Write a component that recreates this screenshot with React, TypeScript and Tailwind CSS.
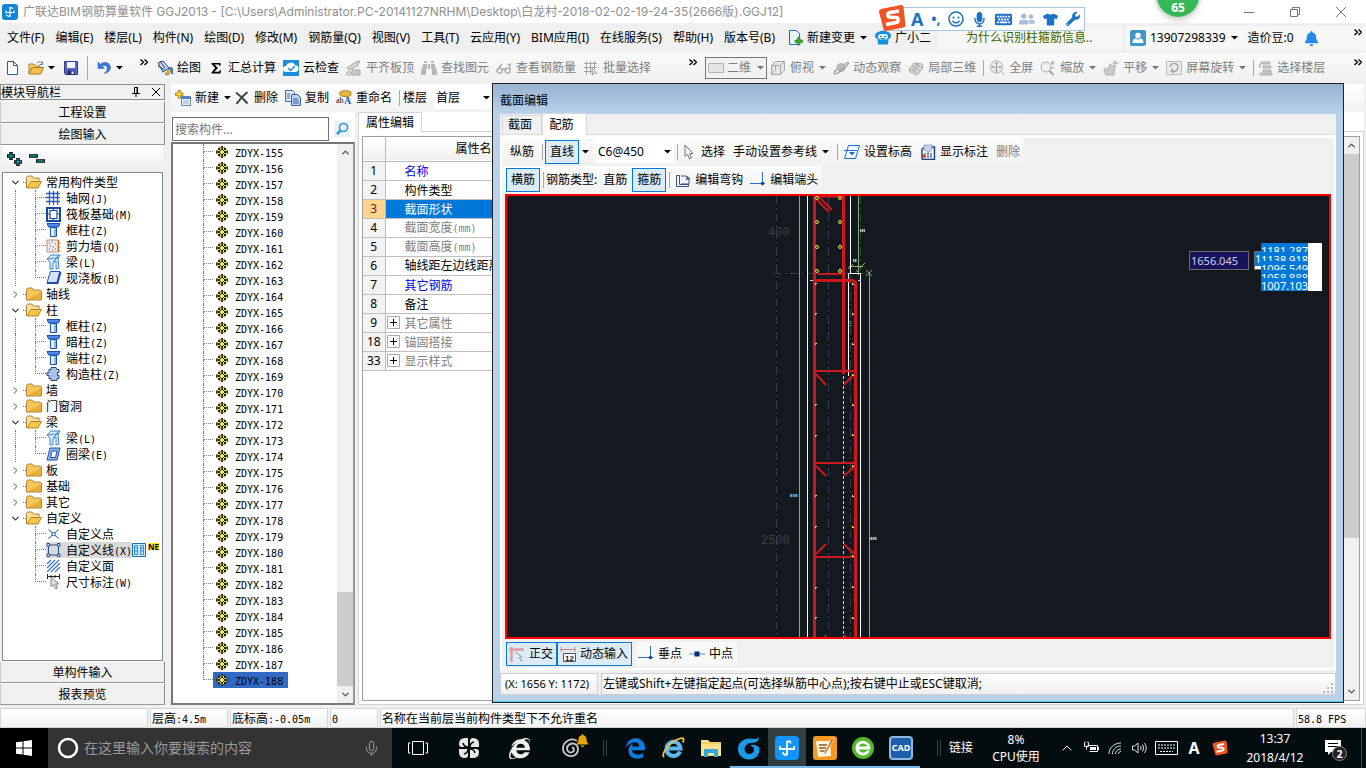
import React from "react";
import {
  FaBell,
  FaBinoculars,
  FaEdgeLegacy,
  FaInternetExplorer,
  FaKeyboard,
  FaMicrophone,
  FaRegSmile,
  FaTshirt,
  FaUserFriends,
  FaWrench,
} from "react-icons/fa";
import { ChevronDown, ChevronRight, ChevronUp, Mic } from "lucide-react";

const ui = "font-['Noto_Sans','Noto_Sans_CJK_SC',sans-serif]";

// Chinese at 12px, latin as half width characters
function Song({ children }: { children: string }) {
  return (
    <span className="whitespace-nowrap font-['Noto_Sans_CJK_SC',sans-serif] text-xs">
      {children.split(/([\x20-\x7e]+)/).map((part, i) =>
        i % 2 ? (
          <span key={i} className="whitespace-pre font-['DejaVu_Sans_Mono','Noto_Sans_CJK_SC',monospace] text-[10px]">
            {part}
          </span>
        ) : (
          part
        )
      )}
    </span>
  );
}

function Svg({ children, className = "h-4 w-4", box = "0 0 16 16" }: { children: React.ReactNode; className?: string; box?: string }) {
  return (
    <svg viewBox={box} className={"shrink-0 " + className} fill="none" aria-hidden="true">
      {children}
    </svg>
  );
}

function Caret({ gray = false }: { gray?: boolean }) {
  return (
    <Svg className="h-1 w-[7px]" box="0 0 7 4">
      <path d="M0 0h7L3.5 3.6z" fill={gray ? "#777" : "#000"} />
    </Svg>
  );
}

function Sep() {
  return <div className="h-4 w-px shrink-0 bg-[#a9a9a9]" />;
}

function More() {
  return (
    <button aria-label="更多" className="shrink-0">
      <Svg className="h-[7px] w-2" box="0 0 8 7">
        <path d="M.5.5l3 2.8-3 2.8M4.5.5l3 2.8-3 2.8" stroke="#000" strokeWidth="1.4" />
      </Svg>
    </button>
  );
}

const icons: Record<string, React.ReactNode> = {
  file: <path d="M3.500 1.500h6l4 4v9h-10zM9.500 1.500v4h4" fill="#fff" stroke="#38598c" />,
  open: (
    <>
      <path d="M1 14V4h5l1.500 2H12v2" fill="#f2cf6b" stroke="#a57c23" />
      <path d="M1 14l3-6.500h11.500L12.500 14z" fill="#f9c14b" stroke="#a57c23" />
      <path d="M9 3c2-2 4-1.500 5 .5M14.500 1.500v3h-3" stroke="#52749e" />
    </>
  ),
  save: (
    <>
      <path d="M1.500 1.500h13v13h-12l-1-1z" fill="#5b66c9" stroke="#303a91" />
      <path d="M4 2h8v6H4z" fill="#f2f4ff" />
      <path d="M4.500 10.500h7V15h-7z" fill="#262d68" />
      <path d="M8.500 11.500h2V14h-2z" fill="#fff" />
    </>
  ),
  undo: <path d="M2 2v6.500h6.500L6.200 6C9 4.500 12 6 11 9.500c-.4 2-1.500 3-3 4 4-.5 6.500-3 6.500-6C14.500 3 9 .5 4.300 4.200z" fill="#3c78dd" stroke="#2d5bb0" strokeWidth=".5" />,
  paint: (
    <>
      <path d="M1 3l5-2 6 7-6 4z" fill="#c9d8ee" stroke="#27457c" />
      <path d="M3 1l5 7M1 6l7 4" stroke="#27457c" />
      <path d="M8 14l6-7 2 2-5 6z" fill="#f2b13c" stroke="#7b5416" strokeWidth=".7" />
      <path d="M12 8c3 1 4 3 3 6" stroke="#2472d2" strokeWidth="2" />
    </>
  ),
  sigma: <path d="M3.500 3h9v3h-1c0-1-.5-1.500-1.500-1.500H6.500L10 8l-3.800 3.700h4c1 0 1.500-.5 1.800-1.700h1l-.5 3.500h-9v-1L7.200 8 3.500 4z" fill="#000" />,
  cloud: (
    <>
      <path d="M0 0h16v16H0z" fill="#1b8fdb" />
      <path d="M3 12a3 3 0 010-6 5 5 0 019-1 3.600 3.600 0 011 7z" fill="#fff" />
      <path d="M5 8l2.500 2.500L12 6" stroke="#1b8fdb" strokeWidth="1.500" />
    </>
  ),
  slab: (
    <>
      <path d="M1 8l9-6 4-1-3 5-8 4zM6 10h8v5H6z" fill="#d7d7d7" stroke="#a3a3a3" />
      <path d="M1 12h4v3H1zM9 11v4M12 11v4" stroke="#a3a3a3" />
    </>
  ),
  batch: (
    <>
      <path d="M1 3.500h13M1 7.500h13M1 11.500h8M3.500 1v14M7.500 1v13M11.500 1v8" stroke="#a5a5a5" />
      <path d="M9 8l5 5-3 .3-1.500 2z" fill="#ddd" stroke="#999" strokeWidth=".8" />
    </>
  ),
  rect: <path d="M.5 3.500h15v9H.5z" fill="#e4e4e4" stroke="#b4b4b4" />,
  cube: (
    <>
      <path d="M1.500 5.500l4-4h9v9l-4 4h-9z" fill="#e5e5e5" stroke="#a6a6a6" />
      <path d="M1.500 5.500h9v9M10.500 5.500l4-4M5.500 9.500V6M5.500 10l-4 4" stroke="#a6a6a6" />
    </>
  ),
  orbit: (
    <>
      <circle cx="8" cy="7.500" r="4.500" fill="#b9b9b9" />
      <path d="M11 5c3-3 4.500-3 4.500-2C15.500 5 5 14 2 14c-2-.5 0-3 2-5" stroke="#9b9b9b" strokeWidth="1.200" />
    </>
  ),
  local3d: (
    <>
      <path d="M1 9l5-6 8 1 1 4-6 7-7-3z" fill="#dedede" stroke="#a8a8a8" />
      <path d="M4 6l8 5M7 4l7 4M2 9l7 4M6 12l5-8M4 11l5-8" stroke="#a8a8a8" />
    </>
  ),
  full: (
    <>
      <circle cx="7.500" cy="7" r="6" fill="#f1f1f1" stroke="#a9a9a9" />
      <path d="M7.500 2.500v9M3 7h9M6 4l1.500-1.500L9 4M6 10l1.500 1.500L9 10M4.500 5.500L3 7l1.500 1.500M10.500 5.500L12 7l-1.500 1.500M12 11.500l3.500 3.500" stroke="#a2a2a2" />
    </>
  ),
  zoom: (
    <>
      <circle cx="6" cy="7" r="5" fill="#f1f1f1" stroke="#a9a9a9" />
      <path d="M9.500 11l4 4" stroke="#a2a2a2" strokeWidth="2" />
      <path d="M12.500 1v4M10.500 3h4M10.500 8h4" stroke="#a2a2a2" />
    </>
  ),
  hand: (
    <>
      <path d="M3 15c-2-4-3-7-1-7l2 2 3-6 3 2 2 0-1 9z" fill="#c9c9c9" stroke="#b0b0b0" />
      <path d="M12 0v6M9.500 3h6" stroke="#a2a2a2" />
    </>
  ),
  rotate: (
    <>
      <path d="M.5 1.500h15v13H.5z" fill="#ececec" stroke="#bbb" />
      <path d="M4 7c1-5 8-4 8 0s-4 5-6 4M7 8.500L5 11l3 2" stroke="#9d9d9d" strokeWidth="1.300" />
    </>
  ),
  floors: <path d="M4 2h9v2H4zM6 6h8v2H6zM6 10h8v2H6zM3 13h12v2H3zM2 4l2 2-2 2" fill="#d0d0d0" stroke="#a2a2a2" strokeWidth=".8" />,
  change: (
    <>
      <path d="M2.500.5h7l3 3v11h-10z" fill="#e8f3fb" stroke="#1d6db2" />
      <path d="M10.500 7.500h2.500V10h2.500v2.500H13V15h-2.500v-2.500H8V10h2.500z" fill="#3aa935" stroke="#1e7a1c" strokeWidth=".6" />
    </>
  ),
  robot: (
    <>
      <path d="M0 4.500q1-2 3-2.500 5-3 10 0 2 .5 3 2.500L15.500 8l-2 1-.5 5.500H3L2.500 9l-2-1z" fill="#1492dd" />
      <rect x="3" y="4" width="10" height="5.500" rx="2.700" fill="#d3efff" />
      <path d="M5 6.500h1.500M9.500 6.500H11M6 8.200c1 .8 3 .8 4 0" stroke="#105a93" />
    </>
  ),
  user: (
    <>
      <rect width="16" height="16" rx="2" fill="#3f97c9" />
      <circle cx="8" cy="5.500" r="2.800" fill="#fff" />
      <path d="M2.500 13c0-4 2-4.500 4-4.500L8 10l1.500-1.500c2 0 4 .5 4 4.500z" fill="#fff" />
    </>
  ),
  create: (
    <>
      <path d="M6.500 6.500h9v9h-9z" fill="#eef5fc" stroke="#5f83ad" />
      <path d="M7 7h8v2H7z" fill="#3b83d6" />
      <path d="M8 11h6M8 13h6" stroke="#8aabd0" />
      <path d="M3 .5h2.500V3H8v2.500H5.500V8H3V5.500H.5V3H3z" fill="#ffd93b" stroke="#977012" strokeWidth=".8" />
    </>
  ),
  cross: <path d="M2 2.500c4 3 8 7 11.500 11M13.500 2C9 5.500 6 9 2.500 14" stroke="#444" strokeWidth="2" />,
  copy: (
    <>
      <path d="M.5.500h7l2 2v9h-9z" fill="#dfeafa" stroke="#3b66ab" />
      <path d="M6.500 4.500h6l3 3v8h-9z" fill="#b7d0f3" stroke="#3b66ab" />
      <path d="M2 4h3M2 6h3M2 8h3M8 9h5M8 11h6M8 13h6" stroke="#3b66ab" />
    </>
  ),
  rename: (
    <>
      <path d="M3 3c3-3 9-3 12-1v3l-3 2-7-1z" fill="#e6b93c" stroke="#8b6513" strokeWidth=".7" />
      <text x="0" y="13" fontSize="8" fontFamily="Liberation Serif" fill="#000">ab</text>
      <text x="8" y="13.500" fontSize="10" fontWeight="bold" fontFamily="Liberation Serif" fill="#2359b8">A</text>
    </>
  ),
  cursor: <path d="M4 1l8 8.500H8.500l2 4.500-2 1-2-4.700L4 12.500z" fill="#f5f5f5" stroke="#777" />,
  elevation: (
    <>
      <path d="M4.500 1.500h11l-4 13h-11z" stroke="#1a6fc1" fill="#f4faff" />
      <path d="M0 6.500h13" stroke="#1a6fc1" />
      <path d="M5 8h6l-3 3.500z" fill="#1a6fc1" />
    </>
  ),
  dims: (
    <>
      <path d="M2 15.500V5l3-2M2 15.500h12.500V3H11" stroke="#163d70" strokeWidth="1.400" />
      <path d="M4 1h8v5l-3 2-5-2z" fill="#c5d4ee" stroke="#6c84b4" strokeWidth=".6" />
      <path d="M5 14V9M8 14V8M11 14V9" stroke="#163d70" />
      <path d="M2.500 10.500h2.500v3H2.500z" fill="#d43a1f" />
    </>
  ),
  hook: (
    <>
      <path d="M1.500 3.500h3v9h9v2h-12zM6 4h5l3 3v5H6" stroke="#3c4d8b" fill="#f1f4fd" />
      <path d="M12 4l3.500 3L11 8z" fill="#3c4d8b" />
    </>
  ),
  end: (
    <>
      <path d="M0 11.500h15M12.500 0v11" stroke="#3371c9" />
      <circle cx="12.500" cy="11.500" r="1.700" fill="#093f95" />
    </>
  ),
  mid: (
    <>
      <path d="M0 8h16" stroke="#5d91d5" />
      <path d="M5.500 5.500h5v5h-5z" fill="#082e7a" />
    </>
  ),
  ortho: (
    <>
      <path d="M2.500 1v15M0 3.500h15" stroke="#e39b9b" strokeWidth="2.500" />
      <path d="M6 6l7 5-3 .5 3 4" stroke="#8b8b8b" fill="#fff" />
    </>
  ),
  dyn: (
    <>
      <path d="M1 1v5M15 1v5M1 3.500h14" stroke="#d77a7a" />
      <path d="M3.500 7.500h12v8h-12z" fill="#fff" stroke="#555" />
      <text x="5" y="14.500" fontSize="8" fontWeight="bold" fontFamily="Liberation Sans" fill="#111">12</text>
    </>
  ),
  folder: (
    <>
      <path d="M.5 14V3.500L2 2h4l1.500 2H14l1.500 1v9z" fill="#f3c759" stroke="#ad883a" />
      <path d="M1 14L15 6v8z" fill="#dc9d22" opacity=".6" />
    </>
  ),
  folderOpen: (
    <>
      <path d="M.5 14V3.500L2 2h4l1.500 2H13v4" fill="#f8df94" stroke="#ad883a" />
      <path d="M1 14l4-6.500h10.500L12 14z" fill="#fbc444" stroke="#ad883a" />
    </>
  ),
  grid: <path d="M0 3.500h14M0 7.500h14M0 11.500h14M3.500 1v14M7.500 1v14M11.500 1v14" stroke="#2c5fc0" strokeWidth="1.300" />,
  raft: (
    <>
      <path d="M1 2h13v13H1z" fill="#fff" stroke="#124b9b" strokeWidth="2" />
      <path d="M4 4.500h7v8H4zM1 8h3M11 8h3M7.500 2v3M7.500 12v3" stroke="#124b9b" strokeWidth="1.200" />
    </>
  ),
  column: (
    <>
      <path d="M1 1.500h13L12.500 5h-10z" fill="#4f8be0" stroke="#1a4fae" />
      <path d="M4.500 5.500h6v9h-6z" fill="#e9f3ff" stroke="#1a4fae" />
      <path d="M9 6v8" stroke="#8fb8f0" strokeWidth="2" />
    </>
  ),
  shear: (
    <>
      <path d="M1 2h11v12H1z" fill="#ececec" stroke="#c78a6a" />
      <path d="M3 5h1M6 4h1M9 6h1M4 8h1M7 9h1M3 11h1M9 11h1M6 12h1" stroke="#555" />
      <path d="M12.500 2v12M12 5h2.500M12 9h2.500M12 13h2.500" stroke="#d2691e" />
    </>
  ),
  beam: (
    <>
      <path d="M1 5l4-4h9l-2 4 1 9-3 1V7L7 9v6H4V8z" fill="#d5ebfb" stroke="#3b87c8" />
      <path d="M2 5l8-1 3-3M7 8l5-5" stroke="#3b87c8" />
    </>
  ),
  slabBlue: (
    <>
      <path d="M4.500 1.500h9.500l-3 11H1z" fill="#cfe1fb" stroke="#1f4fa8" />
      <path d="M1 13h10.500l3-11" stroke="#1f4fa8" strokeWidth="2" />
    </>
  ),
  ring: <path d="M4 2h10l-3 12H1zM6 5h5l-1.500 6.500h-5z" fill="#8fb7ee" stroke="#1f4fa8" fillRule="evenodd" />,
  struct: <path d="M3 3.500h2V1.500h5l1 2h2v3h-1.500v3H13v3h-2v2H5v-2H3v-3H1v-3h2z" fill="#a9c3ea" stroke="#27477e" />,
  point: (
    <>
      <path d="M2.500 3.500l10 9M12.500 3.500l-10 9" stroke="#2e4f86" />
      <circle cx="7.500" cy="8" r="1.700" fill="#fff" stroke="#1b64c9" />
    </>
  ),
  line: (
    <>
      <path d="M2.500 3h10v10h-10z" stroke="#234d8d" />
      <path d="M1 1.500h2.500V4H1zM11.500 1.500H14V4h-2.500zM1 12h2.500v2.500H1zM11.500 12H14v2.500h-2.500z" fill="#fff" stroke="#234d8d" />
    </>
  ),
  area: <path d="M1 6l4-4M1 10l8-8M1 14L13 2M5 14l9-9M9 14l5-5" stroke="#3974d0" strokeWidth="1.200" />,
  measure: (
    <>
      <path d="M1.500 0v5M13.500 0v5M1 2.500h13M5 1v3M9 1v3" stroke="#222" />
      <path d="M5 3l8 7H9.500l2 4-2 1-2-4L5 12.500z" fill="#ddd" stroke="#888" />
    </>
  ),
};

function Icon({ name }: { name: string }) {
  return <Svg>{icons[name]}</Svg>;
}

function Tool({ icon, label, gray = false, caret = false, children }: { icon?: string; label: string; gray?: boolean; caret?: boolean; children?: React.ReactNode }) {
  return (
    <button className={"flex shrink-0 items-center gap-1 whitespace-nowrap " + (gray ? "text-[#7d7d7d]" : "text-black")}>
      {icon && <Icon name={icon} />}
      {children}
      <span>{label}</span>
      {caret && (
        <span className="pl-px">
          <Caret gray={gray} />
        </span>
      )}
    </button>
  );
}

function Toggle({ label, icon, wide = false }: { label: string; icon?: string; wide?: boolean }) {
  return (
    <button className={"flex h-6 shrink-0 items-center gap-1 border border-[#0078d7] bg-[#dcebf8] " + (wide ? "pr-[3px] pl-0.5" : "px-1")}>
      {icon && <Icon name={icon} />}
      {label}
    </button>
  );
}

const menus = ["文件(F)", "编辑(E)", "楼层(L)", "构件(N)", "绘图(D)", "修改(M)", "钢筋量(Q)", "视图(V)", "工具(T)", "云应用(Y)", "BIM应用(I)", "在线服务(S)", "帮助(H)", "版本号(B)"];

function TitleBar() {
  return (
    <header className="relative flex h-[23px] items-center bg-white pl-0.5 text-[#8f8f8f]">
      <Svg className="h-4 w-4">
        <rect width="16" height="16" rx="3" fill="#1287d8" />
        <path d="M8 3v10M4 6.500v2h8v-2M8 12.500c-2 0-3-.5-4-2M8 4c1.500-1 2.500 0 2.500 1" stroke="#fff" strokeWidth="1.200" />
      </Svg>
      <h1 className="ml-[5px] font-['Inter','Noto_Sans_CJK_SC',sans-serif] text-xs whitespace-nowrap">
        广联达BIM钢筋算量软件 GGJ2013 - [C:\Users\Administrator.PC-20141127NRHM\Desktop\白龙村-2018-02-02-19-24-35(2666版).GGJ12]
      </h1>
      <div className="ml-auto flex items-center gap-9 pr-5">
        <button aria-label="最小化">
          <Svg className="h-[10px] w-[10px]" box="0 0 10 10"><path d="M0 5.500h10" stroke="#777" /></Svg>
        </button>
        <button aria-label="还原">
          <Svg className="h-[10px] w-[10px]" box="0 0 10 10"><path d="M.5 2.500h7v7h-7zM2.500 2V.5h7v7H8" stroke="#777" /></Svg>
        </button>
        <button aria-label="关闭">
          <Svg className="h-[10px] w-[10px]" box="0 0 10 10"><path d="M0 0l10 10M10 0L0 10" stroke="#777" /></Svg>
        </button>
      </div>

      {/* ime bar */}
      <div className="absolute top-[7px] right-[281px] z-20 flex h-6 w-[196px] items-center border border-[#a9c8de] bg-white pl-[21px] text-[#1c73c5]">
        <div className="absolute -top-1 -left-3">
          <SogouLogo className="h-7 w-7" />
        </div>
        <div className="flex flex-1 items-center justify-between pr-1">
          <b className="text-lg leading-none">A</b>
          <b className="text-sm leading-none">•,</b>
          <FaRegSmile size={16} />
          <FaMicrophone size={15} />
          <FaKeyboard size={17} />
          <FaUserFriends size={16} color="#a9bcd8" />
          <FaTshirt size={15} />
          <FaWrench size={14} />
        </div>
      </div>

      <div className="absolute -top-[27px] right-[165px] z-20 flex h-[46px] w-[46px] items-end justify-center rounded-full border-2 border-[#d9ded9] bg-[#36b856] pb-px text-xs font-bold text-white shadow-md">
        65
      </div>
    </header>
  );
}

function SogouLogo({ className }: { className: string }) {
  return (
    <Svg className={className} box="0 0 28 28">
      <path d="M3 5L23 1q2 0 2.500 2l2 18q0 2-2 2.500L8 27q-2 0-2.500-2L1 8q0-2 2-3z" fill="#f05423" />
      <path d="M21 7l-9 1.500c-3 .7-3 4.500 0 4.700l6 .3c3 .2 3 4.500 0 5l-10 2" stroke="#fff" strokeWidth="3.500" />
    </Svg>
  );
}

function MenuBar() {
  return (
    <nav className="flex h-[30px] items-center bg-[#f0f0f0]">
      <div className="flex items-center gap-[11px] pl-[7px]">
        {menus.map((m) => (
          <button key={m} className="shrink-0 whitespace-nowrap">{m}</button>
        ))}
      </div>
      <div className="ml-3 flex items-center gap-2">
        <Tool icon="change" label="新建变更" caret />
        <Tool icon="robot" label="广小二" />
      </div>
      <div className="ml-[7px] flex h-6 flex-1 items-center bg-[#f6f6f6] pl-7">
        <a href="#help" className="whitespace-nowrap text-[#336600]">为什么识别柱箍筋信息..</a>
      </div>
      <div className="ml-1 flex h-6 w-[240px] shrink-0 items-center gap-[10px] bg-[#f7f7f7] pl-1">
        <Tool icon="user" label="13907298339" caret />
        <span className="whitespace-nowrap">造价豆:0</span>
        <FaBell size={15} className="text-[#2489ee]" />
        <div className="mr-1 mb-3 ml-auto"><More /></div>
      </div>
    </nav>
  );
}

function MainToolbar() {
  return (
    <div className="flex h-[30px] items-center bg-linear-to-b from-[#fafafa] to-[#f0f0f0]">
      <div className="flex items-center gap-2 pl-1">
        <button aria-label="新建"><Icon name="file" /></button>
        <button aria-label="打开" className="flex items-center gap-1"><Icon name="open" /><Caret /></button>
        <button aria-label="保存"><Icon name="save" /></button>
        <div className="h-6 w-px bg-[#a9a9a9]" />
        <button aria-label="撤销" className="flex items-center gap-1"><Icon name="undo" /><Caret /></button>
      </div>
      <div className="mb-3 ml-[17px]"><More /></div>
      <div className="ml-[9px] flex items-center gap-[7px]">
        <Tool icon="paint" label="绘图" />
        <Tool icon="sigma" label="汇总计算" />
        <Tool icon="cloud" label="云检查" />
        <Tool icon="slab" label="平齐板顶" gray />
        <Tool label="查找图元" gray><FaBinoculars size={16} color="#b5b5b5" /></Tool>
        <Tool label="查看钢筋量" gray>
          <Svg><path d="M1 11c0-3 4-4 5-1 1 4-4 4-5 1zM9 11c0-3 4-4 5-1 1 4-4 4-5 1zM6 9h3M2 9l4-5M14 9V4l-2 1" stroke="#a6a6a6" strokeWidth="1.300" /></Svg>
        </Tool>
        <Tool icon="batch" label="批量选择" gray />
      </div>
      <div className="mb-3 ml-[38px]"><More /></div>
      <div className="ml-2 flex items-center gap-[7px]">
        <button className="flex h-[22px] w-[62px] shrink-0 items-center gap-[3px] border border-[#777] bg-[#f2f2f2] px-0.5 whitespace-nowrap text-[#7d7d7d]">
          <Icon name="rect" />
          二维
          <span className="ml-auto"><Caret gray /></span>
        </button>
        <div className="-ml-1"><Tool icon="cube" label="俯视" gray caret /></div>
        <Tool icon="orbit" label="动态观察" gray />
        <Tool icon="local3d" label="局部三维" gray />
        <Sep />
        <div className="-ml-0.5"><Tool icon="full" label="全屏" gray /></div>
        <Tool icon="zoom" label="缩放" gray caret />
        <Tool icon="hand" label="平移" gray caret />
        <Tool icon="rotate" label="屏幕旋转" gray caret />
        <Sep />
        <div className="-ml-1"><Tool icon="floors" label="选择楼层" gray /></div>
      </div>
      <div className="mr-1 mb-3 ml-auto"><More /></div>
    </div>
  );
}

type Group = { name: string; items?: string[][] };
const groups: Group[] = [
  { name: "常用构件类型", items: [["grid", "轴网(J)"], ["raft", "筏板基础(M)"], ["column", "框柱(Z)"], ["shear", "剪力墙(Q)"], ["beam", "梁(L)"], ["slabBlue", "现浇板(B)"]] },
  { name: "轴线" },
  { name: "柱", items: [["column", "框柱(Z)"], ["column", "暗柱(Z)"], ["column", "端柱(Z)"], ["struct", "构造柱(Z)"]] },
  { name: "墙" },
  { name: "门窗洞" },
  { name: "梁", items: [["beam", "梁(L)"], ["ring", "圈梁(E)"]] },
  { name: "板" },
  { name: "基础" },
  { name: "其它" },
  { name: "自定义", items: [["point", "自定义点"], ["line", "自定义线(X)"], ["area", "自定义面"], ["measure", "尺寸标注(W)"]] },
];

function NavButton({ label }: { label: string }) {
  return (
    <button className="h-[22px] w-full border border-t-white border-r-[#888] border-b-[#999] border-l-[#ccc] bg-[#f0f0f0]">
      <Song>{label}</Song>
    </button>
  );
}

function ModuleNav() {
  return (
    <aside className="flex w-[165px] shrink-0 flex-col bg-[#f0f0f0] pb-0.5">
      <div className="mb-px flex h-4 items-center border border-[#8c8c8c]">
        <Song>模块导航栏</Song>
        <Svg className="ml-auto h-[10px] w-[8px]" box="0 0 8 10"><path d="M2.500 6V.500h3V6M5 0v6M0 6.500h8M4 7v3" stroke="#000" /></Svg>
        <Svg className="mr-1 ml-3 h-2 w-2" box="0 0 8 8"><path d="M0 0l8 8M8 0L0 8" stroke="#000" /></Svg>
      </div>
      <NavButton label="工程设置" />
      <NavButton label="绘图输入" />
      <div className="mx-0.5 flex h-[27px] items-center bg-linear-to-b from-white to-[#eeeeee] pl-1">
        <Svg className="h-[15px] w-[42px]" box="0 0 42 15">
          <path d="M5 1v8M1 5h8M12 7v8M8 11h8M23 5h9M30 10h9" stroke="#000" strokeWidth="3.500" />
          <path d="M5 2v6M2 5h6M12 8v6M9 11h6M24 5h7M31 10h7" stroke="#099" strokeWidth="1.500" />
        </Svg>
      </div>
      <div className="mx-0.5 flex-1 border border-[#808590] bg-white pt-px">
        {groups.map((g, gi) => (
          <div key={g.name}>
            <div className="flex h-4 items-center pl-[7px]">
              {g.items ? <ChevronDown size={11} strokeWidth={3} color="#444" /> : <ChevronRight size={11} strokeWidth={3} color="#a0a0a0" />}
              <div className="ml-0.5 w-[3px] border-t border-dotted border-[#777]" />
              <Icon name={g.items ? "folderOpen" : "folder"} />
              <span className="ml-1 leading-4"><Song>{g.name}</Song></span>
            </div>
            {g.items?.map(([icon, label], i) => (
              <div key={label} className="flex h-4 items-center pl-3">
                <div className={"h-4 w-5 shrink-0 border-dotted border-[#777] " + (gi < groups.length - 1 ? "border-l" : "")} />
                <div className="h-4 w-[11px] shrink-0">
                  <div className="h-2 border-b border-l border-dotted border-[#777]" />
                  <div className={"h-2 border-dotted border-[#777] " + (i < g.items!.length - 1 ? "border-l" : "")} />
                </div>
                <div className={"flex h-4 shrink-0 items-center gap-1 " + (icon === "line" ? "bg-[#d9d9d9]" : "")}>
                  <Icon name={icon} />
                  <span className="leading-4"><Song>{label}</Song></span>
                </div>
                {icon === "line" && (
                  <>
                    <Svg className="h-[14px] w-[14px]" box="0 0 14 14">
                      <path d="M.5.5h13v13H.5z" fill="#cde8fa" stroke="#286f9f" />
                      <path d="M2.500 2.500h3v9h-3zM8.500 2.500h3v9h-3zM3 5h2M3 8h2M9 5h2M9 8h2" stroke="#2b8fd5" />
                    </Svg>
                    <span className="mb-2 ml-0.5 bg-[#ffe100] text-[8px] leading-[7px] font-bold">NE</span>
                  </>
                )}
              </div>
            ))}
          </div>
        ))}
      </div>
      <NavButton label="单构件输入" />
      <NavButton label="报表预览" />
    </aside>
  );
}

const components = Array.from({ length: 34 }, (_, i) => "ZDYX-" + (155 + i));

function ComponentList() {
  return (
    <section className="flex w-[184px] shrink-0 flex-col bg-white">
      <div className="flex h-[30px] items-center gap-1 pt-1 pl-px">
        <input aria-label="搜索构件" placeholder="搜索构件..." className="h-6 w-[157px] border border-[#6f6f6f] px-0.5 text-xs placeholder:text-[#777]" />
        <button aria-label="搜索" className="ml-px">
          <Svg className="h-4 w-4">
            <path d="M0 0h16v16H0z" fill="#e6f3fb" />
            <circle cx="9.500" cy="6.500" r="4" stroke="#3d93d2" strokeWidth="1.600" />
            <path d="M6.500 9.500L3 13" stroke="#3d93d2" strokeWidth="2.500" />
          </Svg>
        </button>
      </div>
      <div className="flex flex-1 border-2 border-t-[#777] border-r-[#999] border-b-[#777] border-l-[#777] pl-[30px]">
        <div className="flex-1">
          {components.map((c, i) => (
            <div key={c} className="flex h-4 items-center">
              <div className="h-4 w-[10px]">
                <div className="h-2 border-b border-l border-dotted border-[#777]" />
                <div className={"h-2 border-dotted border-[#777] " + (i < components.length - 1 ? "border-l" : "")} />
              </div>
              <div className={"flex h-4 w-[75px] items-center gap-1.5 pl-[3px] " + (i === components.length - 1 ? "bg-[#316ac5]" : "")}>
                <Svg className="h-3 w-3" box="0 0 12 12">
                  <path d="M5 0h2v1.500h2l1 1v2h2v3h-2v2l-1 1H7V12H5v-1.500H3l-1-1v-2H0v-3h2v-2l1-1h2z" fill="#1c1c00" />
                  <path d="M4 2h1v2H4zM7 2h1v2H7zM2 4h2v1H2zM8 4h2v1H8zM2 7h2v1H2zM8 7h2v1H8zM4 8h1v2H4zM7 8h1v2H7zM5 4h2v1H5zM5 7h2v1H5zM4 5h1v2H4zM7 5h1v2H7zM5.500 1h1v1h-1zM5.500 10h1v1h-1zM1 5.500h1v1H1zM10 5.500h1v1h-1z" fill="#fff02a" />
                  <path d="M5 5h2v2H5z" fill="#e8e8e8" />
                </Svg>
                <span className="pl-px"><Song>{c}</Song></span>
              </div>
            </div>
          ))}
        </div>
        <ScrollBar thumbClass="mt-auto h-[94px]" />
      </div>
    </section>
  );
}

function ScrollBar({ thumbClass }: { thumbClass: string }) {
  return (
    <div className="flex w-4 shrink-0 flex-col items-center bg-[#f0f0f0]">
      <div className="flex h-[17px] items-center"><ChevronUp size={11} strokeWidth={3} color="#555" /></div>
      <div className={"w-full bg-[#cdcdcd] " + thumbClass} />
      <div className={"flex h-[17px] items-center " + (thumbClass.includes("mt-auto") ? "" : "mt-auto")}>
        <ChevronDown size={11} strokeWidth={3} color="#555" />
      </div>
    </div>
  );
}

const props: { no: number; name: string; tone: string; group?: boolean }[] = [
  { no: 1, name: "名称", tone: "text-[#0000e8]" },
  { no: 2, name: "构件类型", tone: "text-black" },
  { no: 3, name: "截面形状", tone: "bg-[#0078d7] text-white" },
  { no: 4, name: "截面宽度(mm)", tone: "text-[#808080]" },
  { no: 5, name: "截面高度(mm)", tone: "text-[#808080]" },
  { no: 6, name: "轴线距左边线距离(mm)", tone: "text-black" },
  { no: 7, name: "其它钢筋", tone: "text-[#0000e8]" },
  { no: 8, name: "备注", tone: "text-black" },
  { no: 9, name: "其它属性", tone: "text-[#808080]", group: true },
  { no: 18, name: "锚固搭接", tone: "text-[#808080]", group: true },
  { no: 33, name: "显示样式", tone: "text-[#808080]", group: true },
];

function PropertyEditor() {
  return (
    <section className="ml-[3px] flex min-w-0 flex-1 flex-col">
      <div className="flex h-5 shrink-0">
        <button className="w-16 border-x border-t border-[#d5d5d5] bg-white"><Song>属性编辑</Song></button>
        <div className="flex-1 border-b border-[#d5d5d5] bg-white" />
      </div>
      <div className="flex flex-1 border border-t-0 border-[#d5d5d5] bg-white p-[3px] pt-1">
        <div className="flex flex-1 border border-[#a0a0a0]">
          <div className="flex-1">
            <table className="w-full table-fixed border-collapse">
              <thead>
                <tr className="h-6 border-b border-[#bbb] bg-linear-to-b from-white to-[#f0f0f0]">
                  <th className="w-[22px] border-r border-[#bbb]" />
                  <th className="pl-[70px] text-left font-normal"><Song>属性名称</Song></th>
                </tr>
              </thead>
              <tbody>
                {props.map((p) => (
                  <tr key={p.no} className="h-[19px] border-b border-[#c0c0c0]">
                    <td className={"border-r border-[#bbb] p-0 text-center leading-[18px] " + (p.no === 3 ? "bg-[#ffd58d] text-[#7d1043]" : "bg-[#f3f3f3]")}>
                      {p.no}
                    </td>
                    <td className={"p-0 leading-[18px] " + p.tone}>
                      <div className="flex h-[18px] items-center">
                        <div className="w-[19px] shrink-0 pl-px">
                          {p.group && (
                            <Svg className="h-[13px] w-[13px]" box="0 0 13 13"><path d="M.5.5h12v12H.5z" stroke="#aaa" /><path d="M3 6.500h7M6.500 3v7" stroke="#000" /></Svg>
                          )}
                        </div>
                        <Song>{p.name}</Song>
                      </div>
                    </td>
                  </tr>
                ))}
              </tbody>
            </table>
          </div>
          <ScrollBar thumbClass="h-[384px]" />
        </div>
      </div>
    </section>
  );
}

const tip = "h-[15px] w-[47px] bg-[#0078d7] p-0 text-[11px] leading-[15px] text-white outline-none";
const tips = [
  { v: "1181.287", h: "h-[9px]" },
  { v: "1138.918", h: "h-[9px]" },
  { v: "1096.549", h: "h-[9px]" },
  { v: "1058.888", h: "h-[8px]" },
  { v: "1007.103", h: "h-[13px]" },
];

const leftBars = [283, 313, 343, 404, 435, 495, 526, 587, 617];
const rightBars = [283, 313, 343, 374, 404, 434, 465, 495, 526, 555, 586, 617];

function Dashed({ d }: { d: string }) {
  return (
    <>
      <path d={d} stroke="#05070a" />
      <path d={d} stroke="#343b46" strokeDasharray="9 3 2 3" />
    </>
  );
}

function SectionCanvas() {
  return (
    <div className="relative mx-[3px] flex-1 overflow-hidden border-2 border-[#ff0000] bg-[#14181f]">
      <svg width="823" height="441" viewBox="507 196 823 441" fill="none" className="block" aria-hidden="true">
        <Dashed d="M776.5 196V637" />
        <Dashed d="M828.5 196V637" />
        <Dashed d="M860.5 196V270" />
        <Dashed d="M850.5 275V637" />
        <Dashed d="M773 273.500H870" />
        <g fill="#3a414c" fontSize="12" fontFamily="Liberation Mono">
          <text x="768" y="236">400</text>
          <text x="761" y="544">2500</text>
        </g>
        <path d="M799.500 196V637M858.500 196V275M869.500 273V637M849 266.500H863M866 270l6 6M872 270l-6 6M848 269l5-5M860 268l5-5M856 270l5 5" stroke="#7db368" />
        <path d="M807.500 196V637M850.500 196V273M848.500 376V273.500H860.500V637" stroke="#fff" />
        <path d="M843.500 376V637" stroke="#b9dcf5" strokeDasharray="3 2" />
        <g stroke="#cb171e">
          <path d="M814.500 196V637M843.500 196V374M814 280.500H852q3.500 0 3.500 4V637" strokeWidth="3" />
          <path d="M814 196.500H845M817 274H841M815 371H854M815 463H854M815 557H854" strokeWidth="2" />
          <path d="M817 200l12 12M820 198l12 12M816 374l10 11M854 374l-10 11M816 466l10 10M854 467l-10 9M816 554l10-10M854 554l-10-10M825 637l1-2M845 635l1 2" strokeWidth="2" />
        </g>
        {[198, 222, 247, 271].map((y) => (
          <g key={y} stroke="#f1e93a">
            <circle cx="817" cy={y} r="1.500" />
            <circle cx="840" cy={y} r="1.500" />
          </g>
        ))}
        <g fill="#f1e93a">
          {leftBars.map((y) => <path key={y} d={`M815 ${y}h2v1h-1v1h-1z`} />)}
          {rightBars.map((y) => <path key={y} d={`M852 ${y}h1v1h1v1h-2z`} />)}
        </g>
        <path d="M790 495.500h8" stroke="#4d9fe6" strokeWidth="3" strokeDasharray="2 .5" />
        <path d="M869 538.500h8M860 230.500h5M853 260.500h4" stroke="#b9b9b9" strokeWidth="3" strokeDasharray="1.500 .5" />
        <path d="M850.500 321v5" stroke="#22b14c" strokeDasharray="1 1" strokeWidth="2" />
        <path d="M810 280.500h3M858 280.500h3" stroke="#b9dcf5" />
      </svg>
      <input aria-label="X" defaultValue="1656.045" className="absolute top-[55px] right-[80px] h-[19px] w-[60px] border border-[#6a6a6a] bg-[#15135c] px-[1px] text-[11px] text-[#cfcfe6]" />
      <div className="absolute top-[55px] right-[61px] h-[19px] w-[14px] border border-[#6a6a6a] bg-white">
        <input aria-label="Y" defaultValue="1" className="block h-[14px] w-[7px] bg-[#0078d7] p-0 text-[11px] text-white" />
      </div>
      <div className="absolute top-[47px] right-[7px] w-[61px]">
        {tips.map((t) => (
          <div key={t.v} className={"overflow-hidden bg-white " + t.h}>
            <input aria-label="长度" defaultValue={t.v} className={"block " + tip} />
          </div>
        ))}
      </div>
    </div>
  );
}

function SectionDialog() {
  return (
    <div role="dialog" aria-label="截面编辑" className="absolute top-0 right-[22px] bottom-[4px] left-[492px] z-10 flex flex-col border border-[#222] bg-[#b9d1ea]">
      <div className="flex h-[30px] shrink-0 items-center bg-linear-to-b from-[#98b4d1] to-[#b9d1ea] pt-1 pl-[7px]">截面编辑</div>
      <div className="mr-[7px] mb-[6px] ml-[7px] flex flex-1 flex-col bg-[#f0f0f0]">
        <div className="flex h-[21px] shrink-0 items-end border-b border-[#d9d9d9] pl-0.5" role="tablist">
          <button role="tab" className="h-[19px] w-10 border border-b-0 border-[#d9d9d9] bg-[#f0f0f0] pr-1">截面</button>
          <button role="tab" aria-selected="true" className="-mb-px h-[22px] w-[45px] border border-b-0 border-[#d9d9d9] bg-white pr-1.5">配筋</button>
        </div>
        <div className="mb-[3px] flex flex-1 flex-col border-2 border-t-[3px] border-white">
          <div className="flex">
            <div className="flex h-[28px] items-center rounded bg-linear-to-b from-[#fcfcfc] to-[#f1f1f1] pr-1 pl-2">
              <Tool label="纵筋" />
              <div className="ml-2"><Sep /></div>
              <div className="ml-0.5"><Toggle label="直线" /></div>
              <button aria-label="直线选项" className="mx-[3px]"><Caret /></button>
              <div className="relative ml-1 flex items-center">
                <select aria-label="钢筋信息" className="h-[22px] w-[78px] appearance-none bg-white pl-0.5">
                  <option>C6@450</option>
                </select>
                <span className="pointer-events-none absolute right-[3px]"><Caret /></span>
              </div>
              <div className="mx-[3px]"><Sep /></div>
              <div className="flex items-center gap-2">
                <Tool icon="cursor" label="选择" />
                <Tool label="手动设置参考线" caret />
                <Sep />
                <div className="-ml-0.5"><Tool icon="elevation" label="设置标高" /></div>
                <Tool icon="dims" label="显示标注" />
                <Tool label="删除" gray />
              </div>
            </div>
          </div>
          <div className="flex">
            <div className="flex h-[28px] items-center rounded bg-linear-to-b from-[#fcfcfc] to-[#f1f1f1] pr-1 pl-1">
              <Toggle label="横筋" />
              <div className="mr-0.5 ml-[3px]"><Sep /></div>
              <span className="mr-1.5">钢筋类型:</span>
              <Tool label="直筋" />
              <div className="mr-[3px] ml-[5px]"><Toggle label="箍筋" /></div>
              <Sep />
              <div className="ml-[5px] flex items-center gap-[7px]">
                <Tool icon="hook" label="编辑弯钩" />
                <Tool icon="end" label="编辑端头" />
              </div>
            </div>
          </div>
          <SectionCanvas />
          <div className="flex h-[29px] shrink-0 items-center pl-1">
            <Toggle icon="ortho" label="正交" wide />
            <Toggle icon="dyn" label="动态输入" wide />
            <div className="ml-1 flex h-6 items-center gap-[7px] bg-[#f8f8f8] pr-1 pl-0.5">
              <Tool icon="end" label="垂点" />
              <Tool icon="mid" label="中点" />
            </div>
          </div>
        </div>
        <div className="flex h-[22px] shrink-0 gap-[3px] whitespace-nowrap">
          <div className="flex w-[98px] items-center border border-[#d0d0d0] bg-linear-to-b from-white to-[#f0f0f0] pl-1 text-[11px]">(X: 1656 Y: 1172)</div>
          <div className="flex flex-1 items-center border border-[#d0d0d0] bg-linear-to-b from-white to-[#f0f0f0] pl-px text-xs">
            左键或Shift+左键指定起点(可选择纵筋中心点);按右键中止或ESC键取消;
            <Svg className="mt-auto ml-auto h-3 w-3" box="0 0 12 12"><path d="M8 1h2v2H8zM4 5h2v2H4zM8 5h2v2H8zM0 9h2v2H0zM4 9h2v2H4zM8 9h2v2H8z" fill="#b5b5b5" /></Svg>
          </div>
        </div>
      </div>
      <div className="h-px bg-[#49cdee]" />
    </div>
  );
}

const statusCell = "flex items-center border border-[#d5d5d5] bg-linear-to-b from-white to-[#f2f2f2] pl-px";

function StatusBar() {
  return (
    <footer className="flex h-[21px] shrink-0 gap-0.5 bg-[#f0f0f0] pt-px">
      <div className={"w-[148px] " + statusCell} />
      <div className={"w-[78px] " + statusCell}><Song>层高:4.5m</Song></div>
      <div className={"w-[98px] " + statusCell}><Song>底标高:-0.05m</Song></div>
      <div className={"w-[48px] " + statusCell}><Song>0</Song></div>
      <div className={"flex-1 " + statusCell}><Song>名称在当前层当前构件类型下不允许重名</Song></div>
      <div className={"w-[70px] " + statusCell}><Song>58.8 FPS</Song></div>
    </footer>
  );
}

function Task({ label, open = false, active = false, wide = false, children }: { label: string; open?: boolean; active?: boolean; wide?: boolean; children: React.ReactNode }) {
  return (
    <button
      aria-label={label}
      className={"flex h-10 shrink-0 items-center justify-center border-b-2 pt-0.5 " + (wide ? "w-[51px] " : "w-[38px] ") + (open ? "border-[#76b9ed] " : "border-transparent ") + (active ? "bg-[#333e41]" : "")}
    >
      {children}
    </button>
  );
}

function Taskbar() {
  return (
    <div className="flex h-10 shrink-0 items-center bg-[#030c0e] text-white">
      <button aria-label="开始" className="flex h-10 w-12 items-center justify-center bg-black">
        <Svg><path d="M0 2.300l6.500-.9v6.100H0zM7.500 1.200L16 0v7.500H7.500zM0 8.500h6.500v6.100L0 13.700zM7.500 8.500H16V16l-8.500-1.200z" fill="#fff" /></Svg>
      </button>
      <div className="flex h-10 w-[344px] items-center bg-[#333] pr-3 pl-2">
        <Svg className="h-6 w-6" box="0 0 24 24"><circle cx="12" cy="12" r="9" stroke="#fff" strokeWidth="2.500" /></Svg>
        <input aria-label="搜索" placeholder="在这里输入你要搜索的内容" className="ml-1 flex-1 bg-transparent text-sm placeholder:text-[#9a9a9a]" />
        <Mic size={17} strokeWidth={1.3} color="#aaa" />
      </div>
      <Task label="任务视图" wide>
        <Svg className="h-5 w-5" box="0 0 20 20"><path d="M4.500 3.500h11v13h-11zM2.500 5H.5v10h2M17.500 5h2v10h-2" stroke="#fff" /></Svg>
      </Task>
      <Task label="风扇" wide>
        <Svg className="h-[22px] w-[22px]" box="0 0 22 22">
          <path d="M10 1v9H4q-3 0-3-3 0-6 6-6zM21 10h-9V4q0-3 3-3 6 0 6 6zM12 21v-9h6q3 0 3 3 0 6-6 6zM1 12h9v6q0 3-3 3-6 0-6-6z" fill="#e8e8e8" />
          <path d="M10 10q-4 0-5-4M12 10q0-4 4-5M12 12q4 0 5 4M10 12q0 4-4 5" stroke="#030c0e" strokeWidth="1.500" />
        </Svg>
      </Task>
      <Task label="浏览器" wide><FaInternetExplorer size={21} color="#eee" /></Task>
      <Task label="通知" wide>
        <div className="relative">
          <Svg className="h-5 w-5" box="0 0 20 20">
            <path d="M16 3C11-1 2 3 2 10.500c0 6 7 9.500 12 6.500 4-3 4-9 0-11-4-1.500-8 1-8 4.500 0 3 3 5 5.500 3.500 2-1 2-4.500-.5-4.500" stroke="#c8c8c8" strokeWidth="1.800" />
          </Svg>
          <FaBell size={13} className="absolute -top-1 -right-2 text-[#e5a50a]" />
        </div>
      </Task>
      <div className="mx-[7px] h-4 w-1 border-x border-[#3c4446]" />
      <div className="flex pl-0.5">
        <Task label="Edge"><FaEdgeLegacy size={21} color="#0f7bdc" /></Task>
        <Task label="IE">
          <Svg className="h-6 w-6" box="0 0 24 24">
            <path d="M19 15.500a7 7 0 11.500-3H6.500" stroke="#5ab7f2" strokeWidth="4" />
            <path d="M3 21C0 18 8 6 19 2.500c4-1 4 1 3 4" stroke="#f3c33a" strokeWidth="1.800" />
          </Svg>
        </Task>
        <Task label="文件资源管理器">
          <Svg className="h-[22px] w-[22px]" box="0 0 22 22">
            <path d="M1 3h7l2 2h11v14H1z" fill="#fbe08a" />
            <path d="M1 6h20" stroke="#e0b94e" />
            <path d="M4 20v-7q0-1 1-1h12q1 0 1 1v7h-4v-4H8v4z" fill="#35a7dc" />
          </Svg>
        </Task>
        <Task label="广联达" open>
          <Svg className="h-6 w-6" box="0 0 24 24">
            <path d="M22 1c-2 3-5 1.500-9 1.500C6 2.500 1 7 1 13c0 6 5 10.500 11 10.500 7 0 11-5 10.500-11C21 9 16 8 13 9.500c3 .5 4.500 2.500 4 5-.7 3-4 4.500-7 3-4-2.500-3-9 3-10.500C18 7 22 6 22 1z" fill="#1a9ae6" />
          </Svg>
        </Task>
        <Task label="GGJ2013" open active>
          <Svg className="h-6 w-6" box="0 0 24 24">
            <rect width="24" height="24" rx="4" fill="#0f95fb" />
            <path d="M12 5v14M5 10v3h14v-3M12 19c-3 0-4-1-4.500-3M12 6c2-1.500 4-.5 3.500 1.500" stroke="#fff" strokeWidth="1.800" />
          </Svg>
        </Task>
        <Task label="便笺" open>
          <Svg className="h-6 w-6" box="0 0 24 24">
            <rect width="24" height="24" rx="3" fill="#f49a1e" />
            <path d="M3 5h14l1 15-13 1z" fill="#fff6e2" />
            <path d="M6 9h8M6 12h7M7 15h5" stroke="#8c5b22" strokeWidth="1.300" />
            <path d="M21 3l-8 14-2 2 .5-3L19 2z" fill="#c65f14" stroke="#fff" strokeWidth=".6" />
          </Svg>
        </Task>
        <Task label="360浏览器" open>
          <Svg className="h-6 w-6" box="0 0 24 24">
            <circle cx="12" cy="12" r="11" fill="#55b82c" />
            <path d="M17.500 14.500a6 6 0 11.500-2.500H7" stroke="#fff" strokeWidth="2.800" />
          </Svg>
        </Task>
        <Task label="CAD" open>
          <div className="flex h-6 w-6 items-center justify-center rounded-sm border-2 border-[#92b8df] bg-[#1c5fae] text-[9px] font-bold">CAD</div>
        </Task>
      </div>
      <div className="mr-2 ml-[17px] h-4 w-1 border-x border-[#3c4446]" />
      <button className="text-xs">链接</button>
      <div className="ml-[19px] w-12 text-center text-xs leading-[17px] whitespace-nowrap">
        8%
        <br />
        CPU使用
      </div>
      <div className="ml-auto flex items-center">
        <div className="flex items-center gap-2">
          <ChevronUp size={16} strokeWidth={1.4} />
          <Svg className="h-4 w-4"><path d="M4.500 5.500h10v6h-8M15.500 7v3M1.500 3v3.500h4V3M3.500 6.500v3M2 1.500V3M5 1.500V3" stroke="#fff" /><path d="M7 7h6v3H7z" fill="#fff" /></Svg>
          <Svg className="h-4 w-4"><path d="M2 14C2 8 7 3 14 3M5.500 14c0-5 4-8 8.500-8M8.500 14c0-3 2.500-5 5.500-5M11.500 14c0-1.500 1-2.500 2.500-2.500" stroke="#ddd" /></Svg>
          <Svg className="h-4 w-4"><path d="M1.500 6v4h2L7 13V3L3.500 6zM9.500 6q1.500 2 0 4M11.500 4.500q2.500 3.500 0 7M13.500 3q3.500 5 0 10" stroke="#ddd" /></Svg>
          <Svg className="h-[14px] w-[23px]" box="0 0 23 14"><path d="M.5.500h22v13H.5z" stroke="#fff" /><path d="M3 4h17M3 7h17M5 10.500h13" stroke="#fff" strokeDasharray="2 1" /></Svg>
          <b className="w-4 text-center text-base">A</b>
          <SogouLogo className="ml-0.5 h-4 w-4" />
        </div>
        <div className="ml-4 w-[62px] text-center text-xs leading-[19px]">
          13:37
          <br />
          2018/4/12
        </div>
        <button aria-label="通知中心" className="relative mr-[17px] ml-[18px]">
          <Svg className="h-5 w-5" box="0 0 20 20"><path d="M1 2h16v12H7l-3 3v-3H1z" fill="#fff" /><path d="M4 5.500h10M4 8.500h10" stroke="#000" /></Svg>
          <span className="absolute top-2 left-2 flex h-[15px] w-[15px] items-center justify-center rounded-full border border-[#888] bg-[#222] text-[10px] font-bold">2</span>
        </button>
        <div className="h-10 w-px bg-[#444]" />
        <div className="w-1" />
      </div>
    </div>
  );
}

export default function App() {
  return (
    <main className={"flex min-h-screen flex-col overflow-hidden bg-[#f0f0f0] text-xs leading-4 text-black " + ui}>
      <TitleBar />
      <MenuBar />
      <MainToolbar />
      <div className="relative flex flex-1 pt-px">
        <ModuleNav />
        <div className="ml-[6px] flex min-w-0 flex-1 flex-col pr-0.5 pb-0.5">
          <div className="flex h-7 shrink-0 items-center gap-[7px] bg-linear-to-b from-white to-[#f2f2f2] pl-1">
            <Tool icon="create" label="新建" caret />
            <div className="-ml-1"><Tool icon="cross" label="删除" /></div>
            <Tool icon="copy" label="复制" />
            <Tool icon="rename" label="重命名" />
            <Sep />
            <label htmlFor="floor" className="-ml-1">楼层</label>
            <div className="relative flex items-center">
              <select id="floor" className="h-[22px] w-[62px] appearance-none bg-white pl-0.5">
                <option>首层</option>
              </select>
              <span className="pointer-events-none absolute right-[6px]"><Caret /></span>
            </div>
          </div>
          <div className="flex flex-1">
            <ComponentList />
            <PropertyEditor />
          </div>
        </div>
        <SectionDialog />
      </div>
      <StatusBar />
      <Taskbar />
    </main>
  );
}
